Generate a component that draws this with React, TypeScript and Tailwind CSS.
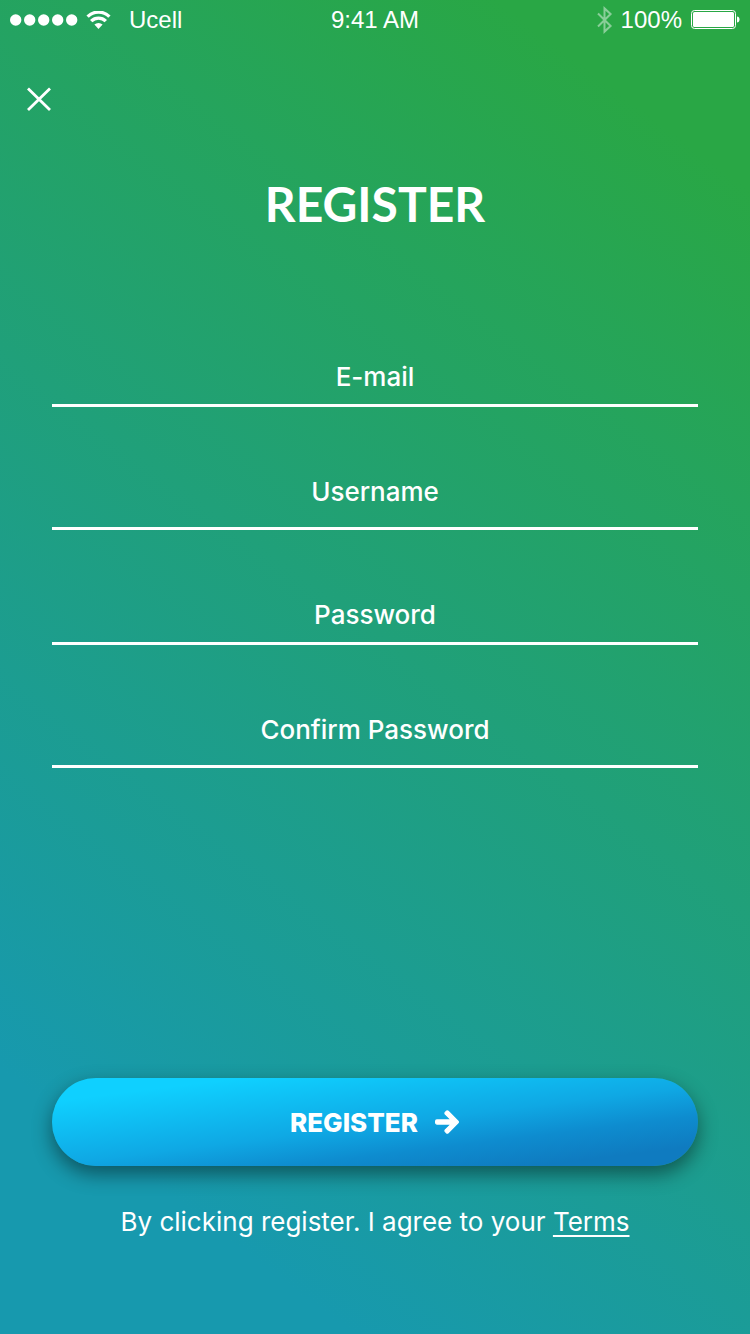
import type { InputHTMLAttributes } from "react";
import { FaArrowRight } from "react-icons/fa";

type FieldProps = InputHTMLAttributes<HTMLInputElement> & {
  id: string;
  label: string;
  roomy?: boolean;
};

function Field({ id, label, roomy = false, ...rest }: FieldProps) {
  return (
    <div className={roomy ? "border-b-3 border-white pb-4" : "border-b-3 border-white pb-2"}>
      <input
        id={id}
        name={id}
        aria-label={label}
        placeholder={label}
        className="block h-10 w-full bg-transparent text-center text-[26px] font-medium text-white outline-none placeholder:text-white placeholder:opacity-100"
        {...rest}
      />
    </div>
  );
}

function StatusBar() {
  return (
    <div className="grid h-10 grid-cols-[1fr_auto_1fr] items-center px-[10px] font-['Liberation_Sans',Arial,sans-serif] text-2xl">
      <div className="flex items-center">
        <svg width="68" height="12" viewBox="0 0 68 12" fill="currentColor" aria-hidden="true">
          <circle cx="5.7" cy="6" r="5.7" />
          <circle cx="19.7" cy="6" r="5.7" />
          <circle cx="33.7" cy="6" r="5.7" />
          <circle cx="47.7" cy="6" r="5.7" />
          <circle cx="61.7" cy="6" r="5.7" />
        </svg>
        <svg className="ml-2" width="25" height="19" viewBox="0 0 25 19" aria-hidden="true">
          <g fill="none" stroke="currentColor" strokeWidth="3.4">
            <path d="M1.6 5.6a15.6 15.6 0 0 1 21.8 0" />
            <path d="M5.2 10.1a10.4 10.4 0 0 1 14.600 0" />
          </g>
          <path d="M8.4 13.600a6 6 0 0 1 8.200 0L12.500 18z" fill="currentColor" />
        </svg>
        <span className="ml-[18px]">Ucell</span>
      </div>
      <span>9:41 AM</span>
      <div className="flex items-center justify-end">
        <svg
          className="opacity-45"
          width="16"
          height="28"
          viewBox="0 0 16 28"
          fill="none"
          stroke="currentColor"
          strokeWidth="2"
          aria-hidden="true"
        >
          <path d="M1 7.500L13.600 20l-6.100 5.600V2.400L13.600 8 1 20.500" />
        </svg>
        <span className="ml-2">100%</span>
        <svg className="ml-2" width="50" height="20" viewBox="0 0 50 20" aria-hidden="true">
          <rect x="1.500" y="0.500" width="44" height="18" rx="3" fill="none" stroke="currentColor" />
          <rect x="3" y="2" width="41" height="15" rx="1.500" fill="currentColor" />
          <path d="M47 6.500c1.500 0 2.500 1.200 2.500 3s-1 3-2.500 3z" fill="currentColor" />
        </svg>
      </div>
    </div>
  );
}

export default function App() {
  return (
    <main className="flex min-h-screen flex-col bg-[linear-gradient(217deg,#29a745_10%,#1799ae_86%)] font-[Inter,'Open_Sans',sans-serif] text-white">
      <StatusBar />

      <header className="flex flex-col px-[26px] pt-[46px]">
        <button type="button" aria-label="Close" className="size-[26px] self-start">
          <svg width="26" height="26" viewBox="0 0 26 26" stroke="currentColor" strokeWidth="2.800" aria-hidden="true">
            <path d="M2 2.500L24 24M24 2.500L2 24" />
          </svg>
        </button>
        <h1 className="mt-16 text-center font-[Lato,sans-serif] text-5xl leading-14 font-bold">REGISTER</h1>
      </header>

      <form className="flex grow flex-col px-[52px] pt-[124px] pb-24" onSubmit={(e) => e.preventDefault()}>
        <div className="flex flex-col gap-16">
          <Field id="email" label="E-mail" type="email" autoComplete="email" />
          <Field id="username" label="Username" type="text" autoComplete="username" roomy />
          <Field id="password" label="Password" type="password" autoComplete="new-password" />
          <Field id="confirm-password" label="Confirm Password" type="password" autoComplete="new-password" roomy />
        </div>

        <button
          type="submit"
          className="mt-auto flex h-[88px] w-full items-center justify-center gap-4 rounded-full bg-[linear-gradient(173deg,#0fd0ff_14%,#0fa8e4_52%,#0e8ccf_70%,#0f7bc0_88%)] text-[26px] font-extrabold shadow-[0_8px_20px_rgba(0,0,0,0.45)]"
        >
          REGISTER
          <FaArrowRight className="stroke-current stroke-[24px]" aria-hidden="true" />
        </button>
        <p className="mt-10 text-center text-[26px] leading-8">
          By clicking register. I agree to your{" "}
          <a href="#terms" className="underline decoration-2 underline-offset-4">
            Terms
          </a>
        </p>
      </form>
    </main>
  );
}
